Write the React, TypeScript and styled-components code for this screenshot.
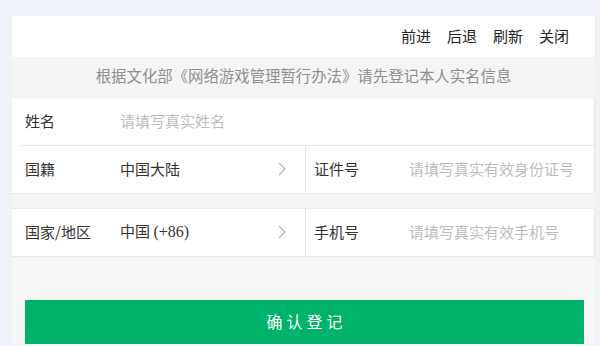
import React from "react";
import styled, { createGlobalStyle } from "styled-components";

const GlobalStyle = createGlobalStyle`
  html, body {
    margin: 0;
    padding: 0;
    background: #eef2f9;
  }
  body {
    font-family: "Noto Sans CJK SC", "Noto Sans", sans-serif;
    line-height: 1;
  }
`;

export default function App() {
  return (
    <>
      <GlobalStyle />
      <Page>
        <Panel>
          <TopBar>
            <NavLink>前进</NavLink>
            <NavLink>后退</NavLink>
            <NavLink>刷新</NavLink>
            <NavLink>关闭</NavLink>
          </TopBar>
          <Notice>根据文化部《网络游戏管理暂行办法》请先登记本人实名信息</Notice>

          <FullRow>
            <Label>姓名</Label>
            <Placeholder>请填写真实姓名</Placeholder>
          </FullRow>

          <SplitRow>
            <Cell $left>
              <Label>国籍</Label>
              <Value>中国大陆</Value>
              <Chevron />
            </Cell>
            <Cell>
              <Label>证件号</Label>
              <Placeholder>请填写真实有效身份证号</Placeholder>
            </Cell>
          </SplitRow>

          <Spacer />

          <SplitRow>
            <Cell $left>
              <Label>国家/地区</Label>
              <Value>
                中国 <Latin>(+86)</Latin>
              </Value>
              <Chevron />
            </Cell>
            <Cell>
              <Label>手机号</Label>
              <Placeholder>请填写真实有效手机号</Placeholder>
            </Cell>
          </SplitRow>

          <Footer>
            <SubmitButton>确认登记</SubmitButton>
          </Footer>
        </Panel>
      </Page>
    </>
  );
}

function Chevron() {
  return (
    <ChevronIcon width="8" height="14" viewBox="0 0 8 14">
      <path d="M1 1 L7 7 L1 13" fill="none" stroke="#b5b5b5" strokeWidth="1.2" />
    </ChevronIcon>
  );
}

const Page = styled.div`
  height: 346px;
  overflow: hidden;
  padding: 16px 5px 0 12px;
  box-sizing: border-box;
`;

const Panel = styled.div`
  width: 583px;
  background: #f7f7f7;
  display: flex;
  flex-direction: column;
`;

const TopBar = styled.div`
  height: 41px;
  background: #fff;
  display: flex;
  align-items: center;
  justify-content: flex-end;
  gap: 16px;
  padding-right: 26px;
  padding-bottom: 2px;
  box-sizing: border-box;
`;

const NavLink = styled.span`
  font-size: 15px;
  color: #222;
`;

const Notice = styled.div`
  height: 41px;
  background: #f5f5f5;
  display: flex;
  align-items: center;
  justify-content: center;
  font-size: 15.4px;
  color: #8f8f8f;
  border-bottom: 1px solid #ececec;
  padding-bottom: 2px;
  box-sizing: border-box;
`;

const FullRow = styled.div`
  height: 48px;
  background: #fff;
  display: flex;
  align-items: center;
  padding-left: 13px;
  padding-bottom: 3px;
  position: relative;
  box-sizing: border-box;
  border-right: 1px solid #e6e6e6;

  &::after {
    content: "";
    position: absolute;
    left: 7px;
    right: 0;
    bottom: 0;
    height: 1px;
    background: #e8e8e8;
  }
`;

const SplitRow = styled.div`
  display: grid;
  grid-template-columns: 294px 289px;
  background: #fff;
  border-bottom: 1px solid #e8e8e8;
`;

const Cell = styled.div<{ $left?: boolean }>`
  height: 47px;
  display: flex;
  align-items: center;
  padding-left: ${(p) => (p.$left ? "13px" : "8px")};
  padding-right: ${(p) => (p.$left ? "19px" : "0")};
  padding-bottom: 2px;
  box-sizing: border-box;
  border-right: 1px solid #e6e6e6;
`;

const Label = styled.span`
  width: 95px;
  flex: none;
  font-size: 15px;
  color: #333;
`;

const Value = styled.span`
  flex: 1;
  font-size: 15px;
  color: #333;
`;

const Latin = styled.span`
  font-family: "Liberation Serif", "Times New Roman", serif;
  font-size: 16px;
`;

const Placeholder = styled.span`
  flex: 1;
  font-size: 15px;
  color: #bcbcbc;
`;

const ChevronIcon = styled.svg`
  flex: none;
`;

const Spacer = styled.div`
  height: 14px;
  background: #f5f5f5;
  border-bottom: 1px solid #ececec;
`;

const Footer = styled.div`
  padding: 43px 11px 0 13px;
`;

const SubmitButton = styled.button`
  width: 100%;
  height: 44px;
  border: none;
  background: #00b36a;
  color: #fff;
  font-family: "Noto Sans CJK SC", sans-serif;
  font-size: 16px;
  line-height: 1;
  letter-spacing: 4px;
  display: flex;
  align-items: center;
  justify-content: center;
  padding: 0 0 3px 4px;
`;
